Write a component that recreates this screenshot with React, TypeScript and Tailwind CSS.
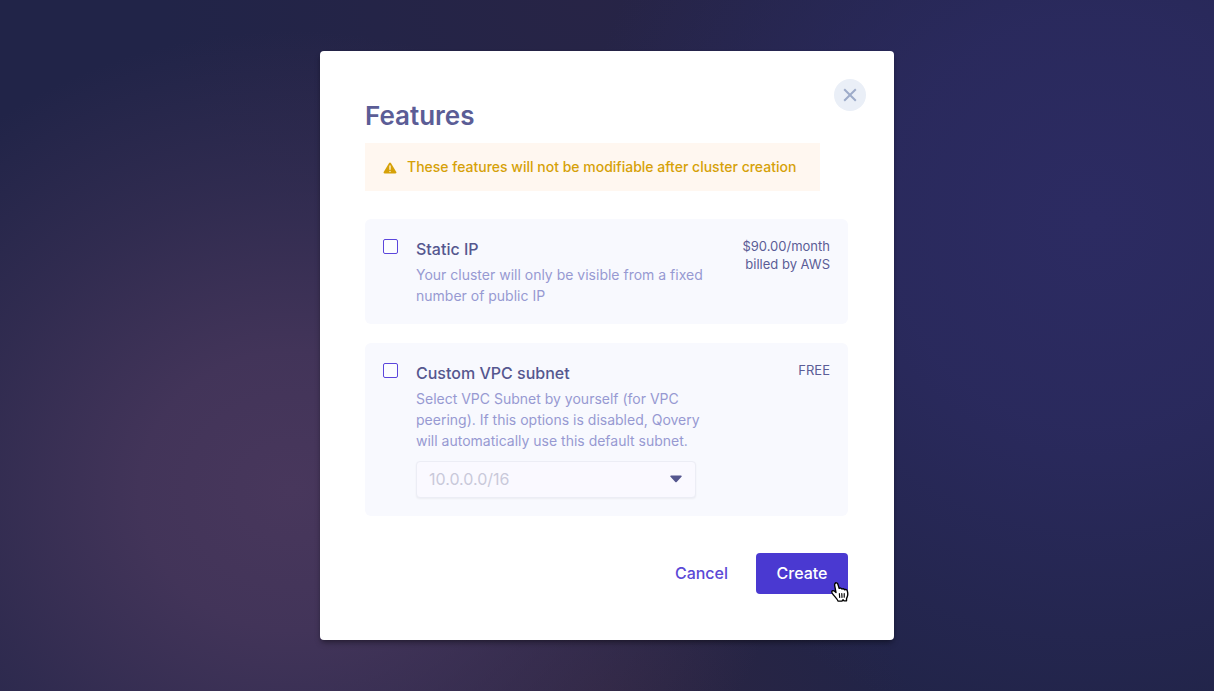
import { useState, type ReactNode } from "react";

function WarningIcon() {
  return (
    <svg viewBox="0 0 14 12" className="mt-[5px] h-3 w-3.5 shrink-0" aria-hidden="true">
      <path
        d="M7 0.4C7.4 0.4 7.7 0.6 7.9 0.9L13.3 10.1C13.7 10.8 13.2 11.6 12.4 11.6H1.6C0.8 11.6 0.3 10.8 0.7 10.1L6.1 0.9C6.3 0.6 6.6 0.4 7 0.4Z"
        fill="#d6a108"
      />
      <path d="M7 4V7.3" stroke="#fff7f0" strokeWidth="1.3" strokeLinecap="round" />
      <circle cx="7" cy="9.5" r="0.7" fill="#fff7f0" />
    </svg>
  );
}

function HandCursor() {
  return (
    <svg
      viewBox="0.5 0.5 17 19"
      className="pointer-events-none absolute -right-0.5 -bottom-2 h-5 w-5"
      aria-hidden="true"
    >
      <path
        d="M4.2 2.1C4.9 0.8 6.5 1.1 6.9 2.4L8.2 6.6C9 6 10.3 6.2 10.8 7.2C11.6 6.6 12.8 6.8 13.3 7.9C14.4 7.3 15.7 7.9 16 9.1C16.5 11 16.6 12.8 15.9 14.6L15.2 16.3V18.4H12.8L11.9 17.4L10.9 18.7H7.1C6.5 16.7 4.4 14.8 2.8 12.8C1.9 11.8 0.9 10.4 1.2 9.5C1.6 8.4 3 8.6 3.9 9.3L5.2 10.5L4 4.1C3.8 3.3 3.9 2.6 4.2 2.1Z"
        fill="white"
        stroke="black"
        strokeWidth="1.3"
        strokeLinejoin="round"
      />
      <path d="M8.4 11.6L8.7 15.2M10.7 11.5L10.9 15.1M13 11.4V14.9" stroke="black" strokeWidth="1.1" strokeLinecap="round" />
    </svg>
  );
}

type FeatureProps = {
  id: string;
  title: string;
  description: string;
  price: ReactNode;
  children?: ReactNode;
};

function Feature({ id, title, description, price, children }: FeatureProps) {
  const [checked, setChecked] = useState(false);
  return (
    <section className="flex items-start rounded-md bg-[#f8f9fe] p-[18px]">
      <input
        id={id}
        type="checkbox"
        checked={checked}
        onChange={(e) => setChecked(e.target.checked)}
        className="mt-0.5 size-[15px] shrink-0 appearance-none rounded-xs border border-[#5b46dc] bg-white/60 checked:bg-[#4a39d1]"
      />
      <div className="ml-[18px] w-[292px]">
        <label htmlFor={id} className="block text-base leading-6 font-medium text-[#55578f]">
          {title}
        </label>
        <p className="mt-[3px] text-sm leading-[21px] text-[#9799d2]">{description}</p>
        {children}
      </div>
      <p className="ml-auto text-right text-[13px] leading-[18px] text-[#5b5d96]">{price}</p>
    </section>
  );
}

export default function App() {
  return (
    <main
      className="flex min-h-screen items-center justify-center bg-[#212448] bg-[radial-gradient(ellipse_500px_460px_at_24%_71%,#48375c_0%,#48375cd9_30%,#48375c66_65%,#48375c00_100%),radial-gradient(ellipse_520px_520px_at_90%_32%,#2c2b62_0%,#2c2b62cc_40%,#2c2b6200_100%),radial-gradient(ellipse_300px_160px_at_50%_100%,#2c2541_0%,#2c254100_100%),radial-gradient(ellipse_420px_300px_at_48%_0%,#272446_0%,#27244600_100%)] font-['Inter',sans-serif]"
    >
      <div
        role="dialog"
        aria-labelledby="dialog-title"
        className="relative w-full max-w-[574px] rounded bg-white pt-[49px] pr-[46px] pb-[46px] pl-[45px] shadow-md shadow-black/30"
      >
        <button
          type="button"
          aria-label="Close"
          className="absolute top-7 right-7 flex size-8 items-center justify-center rounded-full bg-[#eaeff7]"
        >
          <svg viewBox="0 0 14 14" className="size-3.5" aria-hidden="true">
            <path d="M1.2 1.2L12.8 12.8M12.8 1.2L1.2 12.8" stroke="#9dabc9" strokeWidth="2" />
          </svg>
        </button>

        <h1 id="dialog-title" className="text-[26px] leading-8 font-semibold text-[#5b5d96]">
          Features
        </h1>

        <div className="mt-[11px] flex w-fit min-w-[455px] items-start gap-2.5 bg-[#fff7f0] px-[18px] py-3.5">
          <WarningIcon />
          <p className="text-sm leading-5 font-medium text-[#d6a108]">
            These features will not be modifiable after cluster creation
          </p>
        </div>

        <div className="mt-7 flex flex-col gap-[19px]">
          <Feature
            id="static-ip"
            title="Static IP"
            description="Your cluster will only be visible from a fixed number of public IP"
            price={
              <>
                $90.00/month
                <br />
                billed by AWS
              </>
            }
          />
          <Feature
            id="custom-vpc"
            title="Custom VPC subnet"
            description="Select VPC Subnet by yourself (for VPC peering). If this options is disabled, Qovery will automatically use this default subnet."
            price="FREE"
          >
            <div className="relative mt-2.5 w-[280px]">
              <select
                aria-label="Default subnet"
                disabled
                className="block h-[37px] w-full appearance-none rounded-sm border border-[#ecedf5] bg-[#faf9ff] px-3 pb-0.5 text-base text-[#c9c9da] opacity-100 shadow-xs"
              >
                <option>10.0.0.0/16</option>
              </select>
              <svg
                viewBox="0 0 12 8"
                className="pointer-events-none absolute top-3.5 right-3.5 h-2 w-3"
                aria-hidden="true"
              >
                <path d="M1 0.5H11C11.7 0.5 12 1.3 11.5 1.8L6.7 6.9C6.3 7.3 5.7 7.3 5.3 6.9L0.5 1.8C0 1.3 0.3 0.5 1 0.5Z" fill="#55578f" />
              </svg>
            </div>
          </Feature>
        </div>

        <div className="mt-[37px] flex justify-end gap-2">
          <button type="button" className="h-[41px] px-5 pb-0.5 text-base font-medium text-[#5b49d6]">
            Cancel
          </button>
          <div className="relative">
            <button type="button" className="h-[41px] min-w-[92px] rounded bg-[#4a39d1] px-5 pb-0.5 text-base font-medium text-white">
              Create
            </button>
            <HandCursor />
          </div>
        </div>
      </div>
    </main>
  );
}
